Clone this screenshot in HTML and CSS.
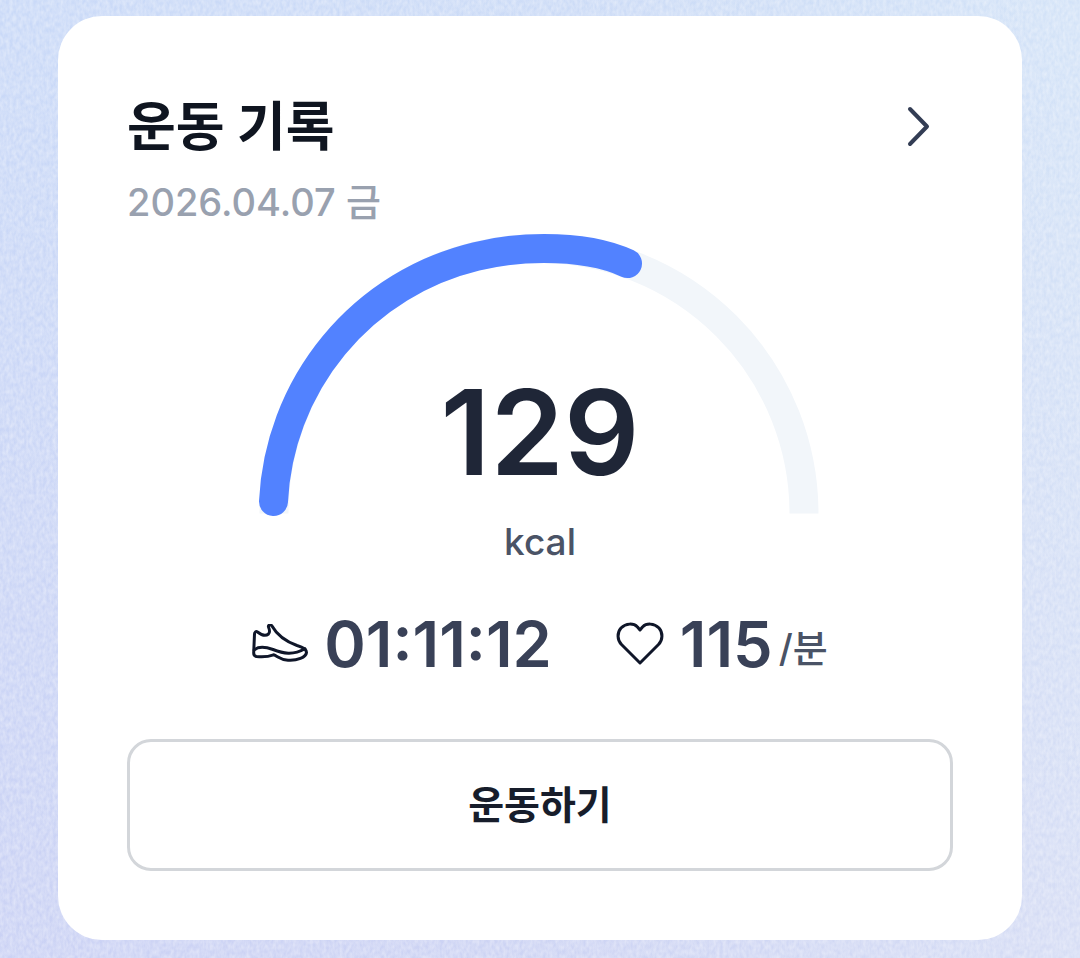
FILE: index.html
```html
<!DOCTYPE html>
<html lang="ko">
<head>
<meta charset="utf-8">
<meta name="viewport" content="width=device-width, initial-scale=1">
<title>운동 기록</title>
<link rel="stylesheet" href="styles.css">
</head>
<body>
<svg class="grain" aria-hidden="true">
  <filter id="grain" x="0" y="0" width="100%" height="100%">
    <feTurbulence type="fractalNoise" baseFrequency="0.3 0.18" numOctaves="2" seed="4"/>
    <feColorMatrix values="0 0 0 0 1  0 0 0 0 1  0 0 0 0 1  0.6 0 0 0 -0.12"/>
  </filter>
  <rect width="100%" height="100%" filter="url(#grain)"/>
</svg>
<main class="card">
  <header class="card-header">
    <h1 class="title">운동 기록</h1>
    <a class="more" href="#detail" aria-label="운동 기록 상세">
      <svg class="chevron" viewBox="0 0 48 48" aria-hidden="true"><path d="M17 6 34 23.500 17 41"/></svg>
    </a>
  </header>
  <p class="date">2026.04.07 금</p>
  <section class="gauge">
    <svg class="gauge-arc" viewBox="0 0 560 282" aria-hidden="true">
      <path class="track" d="M14 279.500A265 265 0 0 1 544 279.500"/>
      <path class="progress" d="M13.500 267.500A265 265 0 0 1 216 22.500C238 17 260 14.500 284 14.500C316 14.500 345 19 367.500 29.500"/>
    </svg>
    <strong class="gauge-value">129</strong>
  </section>
  <p class="unit">kcal</p>
  <div class="stats">
    <div class="stat">
      <svg class="shoe" viewBox="0 0 56 40" aria-hidden="true">
        <path d="M2.500 10C2.500 8 4 7 5.500 8C10 11.500 14 12 16.500 10C18 8.500 17.500 5.500 16.500 3C16 1 18.500 0 19.800 1.800C25 11 35 18 45 21.500C51 23.200 54.500 25.500 54.500 28.500C54 33.500 45 36.800 36 36.200C28 35.800 25.500 32 21.500 30.800C17 32.500 9 33 4.500 32.500C2.500 32.200 1.700 31 1.700 29Z"/>
        <path d="M2.200 26C6 22.500 14 23 21 25.500C31 29.500 41 31.500 53 24.800"/>
      </svg>
      <span class="stat-value">01:11:12</span>
    </div>
    <div class="stat">
      <svg class="heart" viewBox="0 0 48 44" aria-hidden="true"><path d="M24 41 5.500 22.500C1 18 1 10.500 5 6C10 1 17.500 1 21.500 5L24 8 26.500 5C30.500 1 38 1 43 6C47 10.500 47 18 42.500 22.500Z"/></svg>
      <span class="stat-value">115<span class="per">/분</span></span>
    </div>
  </div>
  <button class="start" type="button">운동하기</button>
</main>
</body>
</html>
```
FILE: styles.css
```css
* {
  box-sizing: border-box;
  margin: 0;
}

body {
  min-height: 100vh;
  padding: 16px 58px 17px;
  background:
    linear-gradient(180deg, rgba(204, 232, 250, 0.3) 0%, rgba(208, 206, 240, 0.3) 100%),
    linear-gradient(95deg, #c8d3f7 0%, #cbd5f5 50%, #d8e3f7 100%);
  font-family: Inter, "Noto Sans CJK KR", sans-serif;
  color: #0f1520;
}

.grain {
  position: fixed;
  inset: 0;
  z-index: -1;
  width: 100%;
  height: 100%;
}

.card {
  display: flex;
  flex-direction: column;
  padding: 79px 69px 69px;
  border-radius: 44px;
  background: #fff;
}

.card-header {
  display: flex;
  align-items: center;
  justify-content: space-between;
  padding-right: 12px;
}

.title {
  font-size: 53px;
  line-height: 64px;
  font-weight: 700;
}

.more {
  display: flex;
}

.chevron {
  width: 48px;
  height: 48px;
  fill: none;
  stroke: #333d54;
  stroke-width: 4;
  stroke-linecap: round;
  stroke-linejoin: round;
}

.date {
  margin-top: 19px;
  font-size: 38px;
  line-height: 48px;
  font-weight: 500;
  color: #99a1af;
}

.gauge {
  display: grid;
  justify-content: center;
  margin-top: 8px;
}

.gauge-arc,
.gauge-value {
  grid-area: 1 / 1;
}

.gauge-arc {
  width: 560px;
  max-width: 100%;
  overflow: visible;
  fill: none;
  stroke-width: 29;
}

.track {
  stroke: #f2f6fa;
}

.progress {
  stroke: #5282ff;
  stroke-linecap: round;
}

.gauge-value {
  align-self: end;
  justify-self: center;
  padding-bottom: 36px;
  font-size: 118px;
  line-height: 96px;
  font-weight: 600;
  color: #1f2637;
}

.unit {
  margin-top: 2px;
  font-size: 37px;
  line-height: 48px;
  font-weight: 500;
  text-align: center;
  color: #4a5366;
}

.stats {
  display: flex;
  flex-wrap: wrap;
  justify-content: center;
  gap: 64px;
  margin-top: 46px;
}

.stat {
  display: flex;
  align-items: center;
  gap: 16px;
}

.stat-value {
  display: flex;
  align-items: center;
  font-size: 63px;
  line-height: 64px;
  font-weight: 600;
  color: #394157;
}

.per {
  margin-top: 8px;
  margin-left: 6px;
  font-size: 38px;
  line-height: 48px;
  font-weight: 500;
  color: #4a5366;
}

.shoe,
.heart {
  fill: none;
  stroke: #0f1629;
  stroke-width: 3;
  stroke-linecap: round;
  stroke-linejoin: round;
}

.shoe {
  width: 56px;
  height: 40px;
}

.heart {
  width: 48px;
  height: 44px;
}

.start {
  margin-top: 63px;
  padding: 36px;
  border: 3px solid #d3d6da;
  border-radius: 24px;
  background: #fff;
  font: inherit;
  font-size: 39px;
  line-height: 54px;
  font-weight: 600;
  color: #171d2b;
}
```
